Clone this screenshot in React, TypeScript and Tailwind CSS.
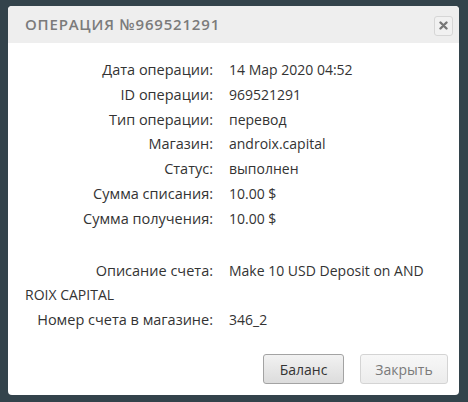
import React from 'react';

const rows: [string, string][] = [
  ['Дата операции:', '14 Мар 2020 04:52'],
  ['ID операции:', '969521291'],
  ['Тип операции:', 'перевод'],
  ['Магазин:', 'androix.capital'],
  ['Статус:', 'выполнен'],
  ['Сумма списания:', '10.00 $'],
  ['Сумма получения:', '10.00 $'],
];

const Row: React.FC<{ label: string; children: React.ReactNode }> = ({ label, children }) => (
  <div className="leading-[24.8px] whitespace-nowrap">
    <span className="inline-block w-[188px] text-right text-[14.5px]">{label}</span>
    <span className="ml-4">{children}</span>
  </div>
);

export default function App() {
  return (
    <div className="w-[468px] h-[402px] bg-[#33434b] pt-[6px] pl-[8px] font-['Open_Sans',sans-serif]">
      <div className="w-[451px] h-[389px] bg-white rounded-[4px] overflow-hidden flex flex-col">
        {/* Header */}
        <div className="h-[37px] bg-[#eeeeee] flex items-center justify-between pl-[17px] pr-[6px]">
          <span className="text-[15px] font-semibold tracking-[0.8px] text-[#7b7b7b] uppercase">
            Операция №969521291
          </span>
          <button className="w-[19px] h-[20px] mt-[2px] rounded-[3px] border border-[#d6d6d6] bg-[#f1f1f1] flex items-center justify-center">
            <svg width="9" height="9" viewBox="0 0 9 9">
              <path d="M1.5 1.5 L7.5 7.5 M7.5 1.5 L1.5 7.5" stroke="#777777" strokeWidth="2.4" strokeLinecap="round" />
            </svg>
          </button>
        </div>

        {/* Body */}
        <div className="flex-1 pt-[15px] px-[17px] text-[14px] text-[#333333]">
          {rows.map(([label, value]) => (
            <Row key={label} label={label}>
              {value}
            </Row>
          ))}
          <div className="h-[27px]" />
          <Row label="Описание счета:">
            Make 10 USD Deposit on AND
            <br />
            ROIX CAPITAL
          </Row>
          <Row label="Номер счета в магазине:">346_2</Row>
        </div>

        {/* Footer */}
        <div className="flex justify-end gap-4 pr-[11px] pb-[11px] text-[14px]">
          <button className="w-[81px] h-[30px] rounded-[3px] border border-[#a3a3a3] bg-gradient-to-b from-[#f2f2f2] to-[#dcdcdc] text-[#333333]">
            Баланс
          </button>
          <button className="w-[88px] h-[30px] rounded-[3px] border border-[#d4d4d4] bg-gradient-to-b from-[#f7f7f7] to-[#ececec] text-[#7a7a7a]">
            Закрыть
          </button>
        </div>
      </div>
    </div>
  );
}
